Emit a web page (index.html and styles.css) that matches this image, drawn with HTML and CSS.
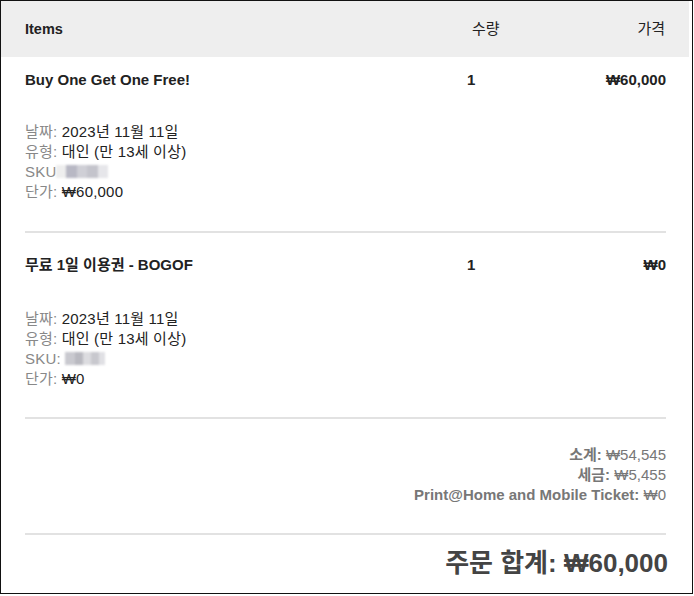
FILE: index.html
```html
<!DOCTYPE html>
<html lang="ko">
<head>
<meta charset="utf-8">
<title>Order</title>
<link rel="stylesheet" href="styles.css">
</head>
<body>
<div class="receipt">
  <div class="head">
    <div class="row">
      <div class="c-name">Items</div>
      <div class="c-qty">수량</div>
      <div class="c-price">가격</div>
    </div>
  </div>
  <div class="body">
    <div class="item item-first">
      <div class="row bold">
        <div class="c-name">Buy One Get One Free!</div>
        <div class="c-qty">1</div>
        <div class="c-price">₩60,000</div>
      </div>
      <div class="meta">
        <div><span class="lab">날짜:</span> 2023년 11월 11일</div>
        <div><span class="lab">유형:</span> 대인 (만 13세 이상)</div>
        <div><span class="lab">SKU</span><span class="blur b1"></span></div>
        <div><span class="lab">단가:</span> ₩60,000</div>
      </div>
    </div>
    <div class="item item-second">
      <div class="row bold">
        <div class="c-name">무료 1일 이용권 - BOGOF</div>
        <div class="c-qty">1</div>
        <div class="c-price">₩0</div>
      </div>
      <div class="meta">
        <div><span class="lab">날짜:</span> 2023년 11월 11일</div>
        <div><span class="lab">유형:</span> 대인 (만 13세 이상)</div>
        <div><span class="lab">SKU:</span> <span class="blur b2"></span></div>
        <div><span class="lab">단가:</span> ₩0</div>
      </div>
    </div>
    <div class="summary">
      <div><b>소계:</b> ₩54,545</div>
      <div><b>세금:</b> ₩5,455</div>
      <div><b>Print@Home and Mobile Ticket:</b> ₩0</div>
    </div>
    <div class="total">주문 합계: ₩60,000</div>
  </div>
</div>
</body>
</html>
```
FILE: styles.css
```css
* { box-sizing: border-box; }
html, body { margin: 0; padding: 0; background: #fff; }
body {
  font-family: "Liberation Sans", "Noto Sans CJK KR", sans-serif;
  font-size: 15px;
  line-height: 20px;
  color: #222;
}
.receipt {
  width: 693px;
  height: 594px;
  border: 1px solid #111;
  padding-right: 3px;
  display: flex;
  flex-direction: column;
}
.head {
  background: #eee;
  height: 56px;
  padding: 18px 23px 0 24px;
  font-weight: bold;
  font-size: 14.5px;
}
.head .c-qty { padding-left: 2px; font-weight: normal; font-size: 15px; }
.head .c-price { font-weight: normal; padding-right: 1px; font-size: 15px; }
.row {
  display: grid;
  grid-template-columns: 1fr 96px 100px;
}
.item .c-qty { margin-left: -3px; }
.c-price { text-align: right; }
.bold { font-weight: bold; }
.body { padding: 0 23px 0 24px; }
.item { border-bottom: 2px solid #e2e2e2; }
.item-first { padding: 13px 0 29px; }
.item-second { padding: 22px 0 28px; }
.meta { margin-top: 32px; letter-spacing: 0.2px; }
.item-second .meta { margin-top: 34px; }
.lab { color: #888; }
.blur {
  display: inline-block;
  height: 13px;
  vertical-align: -1px;
  filter: blur(1.2px);
}
.b1 {
  width: 52px;
  background: linear-gradient(90deg, #eee 0 20%, #b8b8c4 20% 40%, #cfcfd6 40% 60%, #c4c4cc 60% 80%, #e6e6ea 80% 100%);
}
.b2 {
  width: 40px;
  background: linear-gradient(90deg, #c9c9cf 0 25%, #b9b9c0 25% 45%, #dcdce0 45% 65%, #c8c8ce 65% 85%, #e0e0e4 85% 100%);
}
.summary {
  padding: 26px 0 28px;
  text-align: right;
  color: #777;
  border-bottom: 2px solid #e2e2e2;
}
.total {
  text-align: right;
  font-size: 26px;
  line-height: 30px;
  font-weight: bold;
  color: #444;
  padding-top: 13px;
  margin-right: -2px;
}
```
